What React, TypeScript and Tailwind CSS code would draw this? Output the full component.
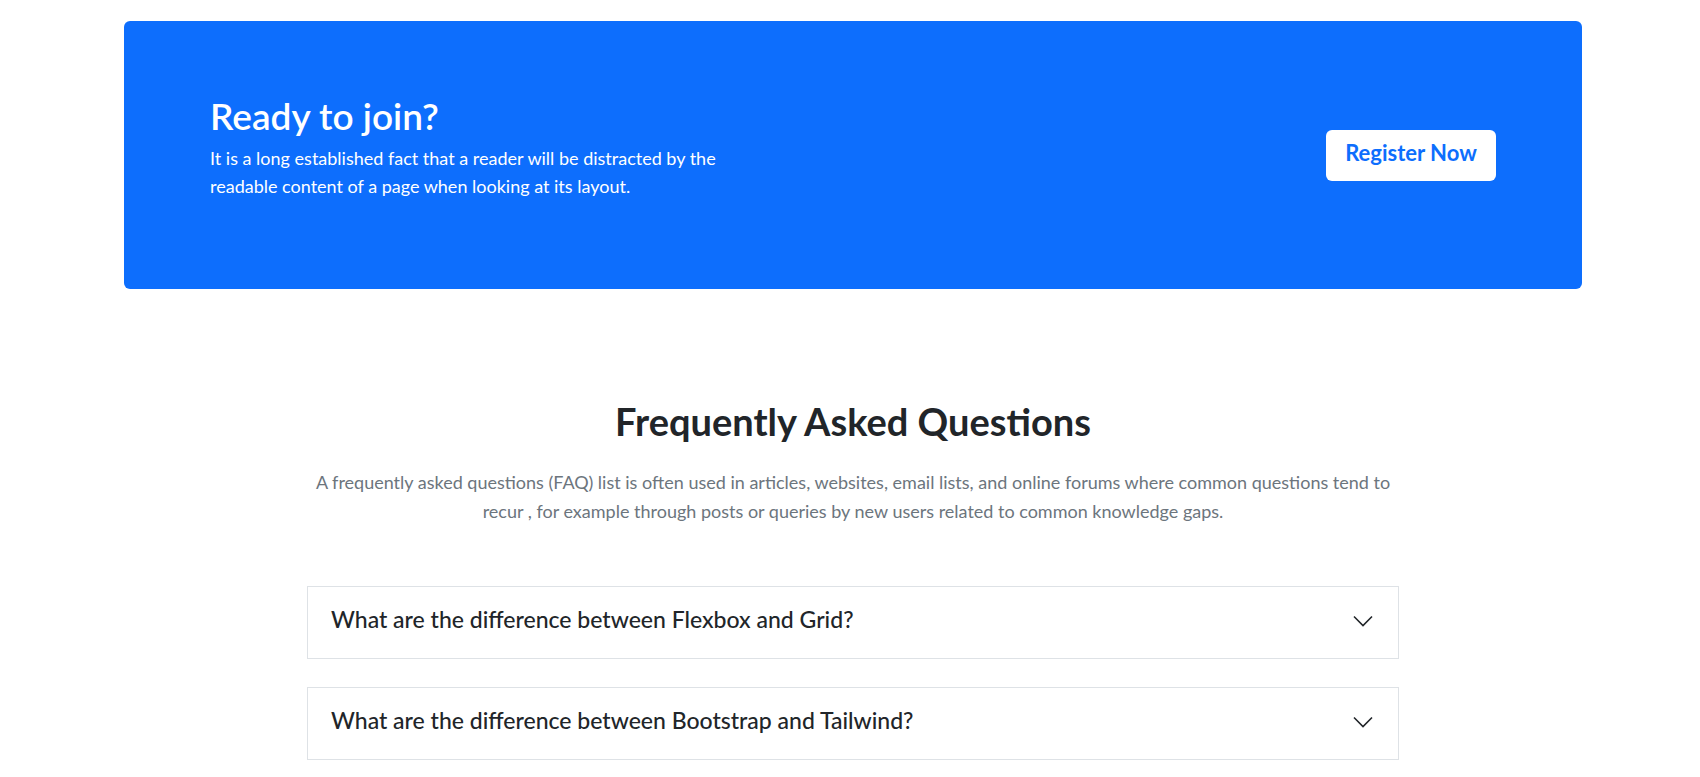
import React from 'react'

const faqs = [
  'What are the difference between Flexbox and Grid?',
  'What are the difference between Bootstrap and Tailwind?',
]

function Chevron() {
  return (
    <svg width="20" height="12" viewBox="0 0 20 12" fill="none" className="shrink-0 mt-[3px]">
      <polyline points="1,1.5 10,10.5 19,1.5" stroke="#212529" strokeWidth="1.6" />
    </svg>
  )
}

export default function App() {
  return (
    <div className="min-h-screen bg-white pl-[6px] pt-[21px] font-['Lato',_'Open_Sans',_sans-serif] text-[#212529]">
      <section className="mx-auto w-[1458px] h-[268px] rounded-md bg-[#0d6efd] px-[86px] flex items-center justify-between">
        <div className="text-white -mt-[16px]">
          <h2 className="text-[37px] leading-[1.2] font-semibold mb-[5px]">Ready to join?</h2>
          <p className="w-[545px] text-[18px] leading-[28px]">
            It is a long established fact that a reader will be distracted by the readable content of a page when looking at its layout.
          </p>
        </div>
        <button className="h-[51px] w-[170px] rounded-md bg-white text-[#0d6efd] text-[22px] font-bold pb-[6px]">
          Register Now
        </button>
      </section>

      <section className="mx-auto w-[1092px] pt-[110px] pb-10">
        <h2 className="text-center text-[38px] leading-[1.2] font-bold">Frequently Asked Questions</h2>
        <p className="mt-[23px] text-center text-[18px] leading-[29px] text-[#6c757d]">
          A frequently asked questions (FAQ) list is often used in articles, websites, email lists, and online forums where common questions tend to recur , for example through posts or queries by new users related to common knowledge gaps.
        </p>
        <div className="mt-[60px] flex flex-col gap-[28px]">
          {faqs.map((q) => (
            <div key={q} className="h-[73px] border border-[#dee2e6] bg-white pl-[23px] pr-[25px] pb-[5px] flex items-center justify-between">
              <span className="text-[23px] font-medium">{q}</span>
              <Chevron />
            </div>
          ))}
        </div>
      </section>
    </div>
  )
}
